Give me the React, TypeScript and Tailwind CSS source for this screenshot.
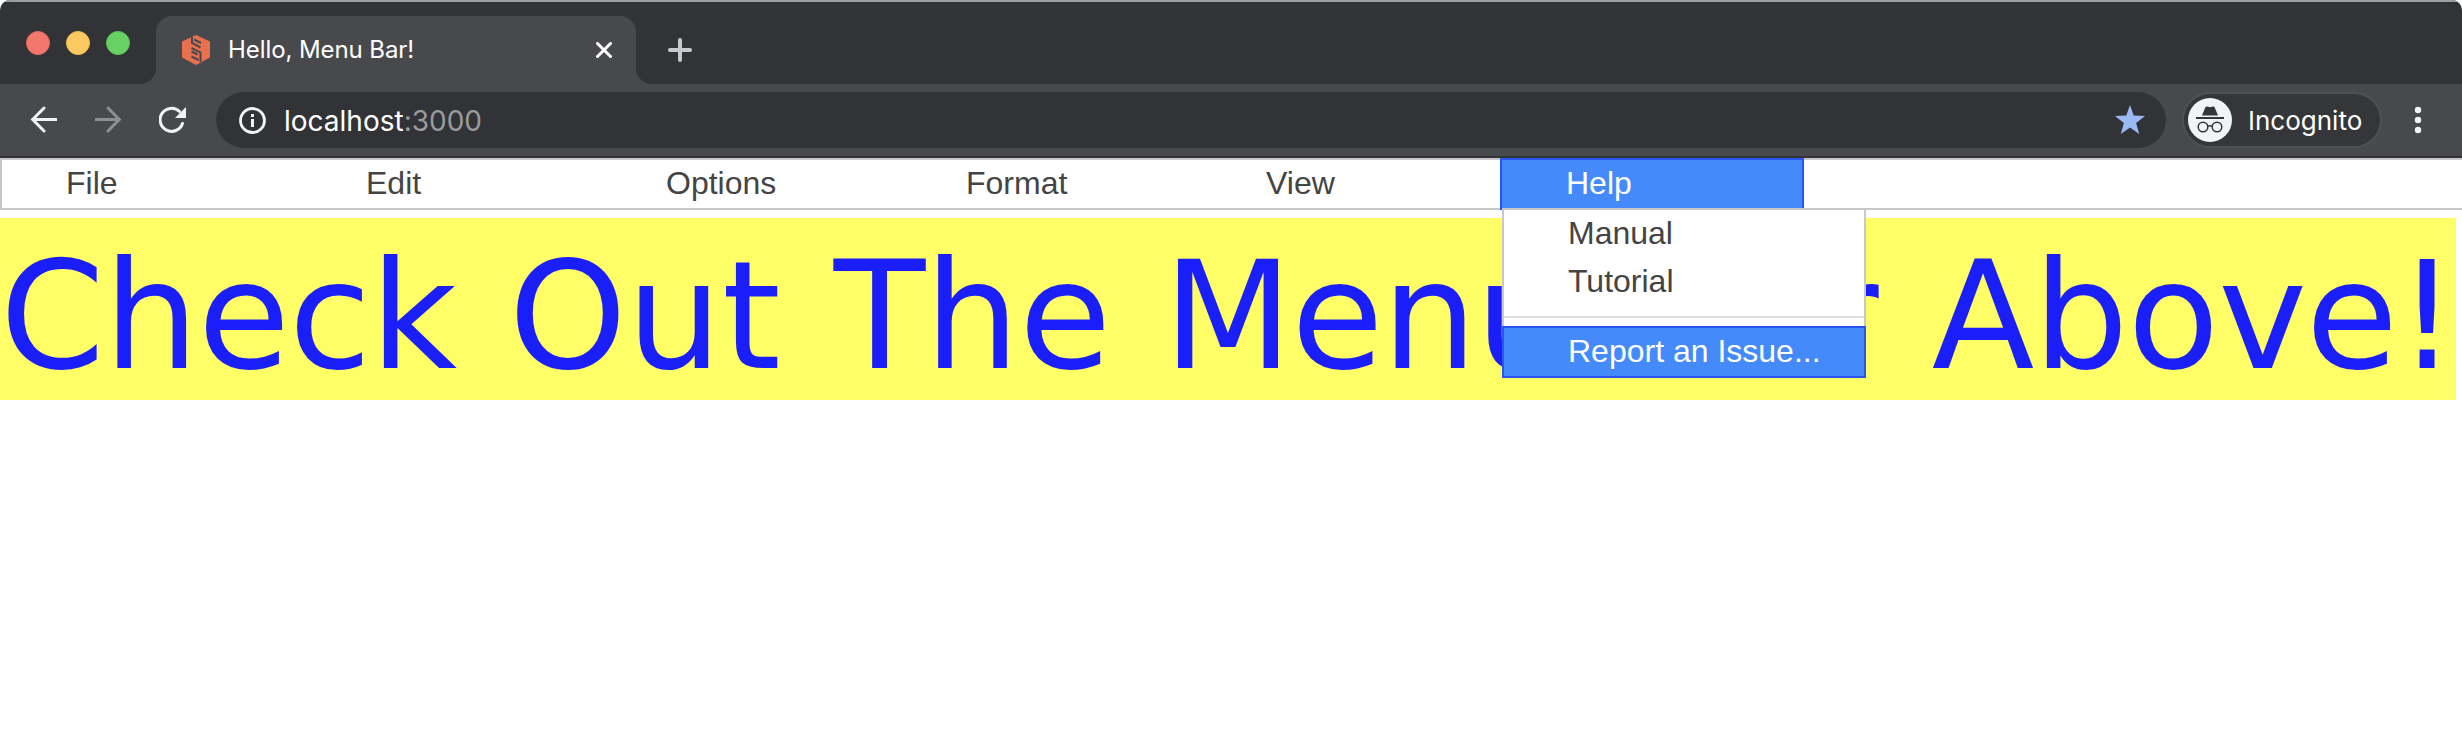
import React from 'react';

const MENUS = ['File', 'Edit', 'Options', 'Format', 'View'];

const WORDS = [
  { text: 'Check', cls: 'w-[456px] tracking-[-1.08px]' },
  { text: 'Out', cls: 'w-[272.1px]' },
  { text: 'The', cls: 'w-[276.8px] tracking-[-0.75px]' },
  { text: 'Menu', cls: 'w-[405.8px] tracking-[-1.5px]' },
  { text: 'Bar', cls: 'w-[257.1px] tracking-[0.2px]' },
  { text: 'Above!', cls: 'w-[524.4px] tracking-[-1.08px]' },
];

function TabStrip() {
  return (
    <div className="flex h-[84px] border-t-2 border-[#9b9fa0] bg-[#323337]">
      <div className="flex w-[140px] gap-4 pt-[29px] pl-[26px]">
        <span className="size-6 shrink-0 rounded-full border border-[#e9695f] bg-[#f4776d]" />
        <span className="size-6 shrink-0 rounded-full border border-[#f2bd50] bg-[#fbc95f]" />
        <span className="size-6 shrink-0 rounded-full border border-[#5bc455] bg-[#67d165]" />
      </div>
      <svg className="mt-[66px] size-4" viewBox="0 0 16 16">
        <path d="M16 0v16H0A16 16 0 0 0 16 0z" fill="#48494c" />
      </svg>
      <div className="mt-[14px] flex h-[68px] w-[480px] items-center rounded-t-2xl bg-[#48494c] pr-6 pl-[26px]">
        <svg className="size-[30px] shrink-0" viewBox="0 0 30 30">
          <path d="M14 0L28 6.500v16L14 30 0 22.500v-16z" fill="#e8704f" />
          <path
            d="M10 2v6l8.500 4.500M12 4.500l7 3.500M9.500 13l9 4.500v9.500M9.500 16.500l6 3M9.500 21.500l7 3.500"
            stroke="#48494c"
            strokeWidth="2"
            fill="none"
          />
        </svg>
        <span className="ml-4 flex-1 text-[24px] leading-[30px] tracking-[-0.08px] whitespace-nowrap text-white">
          Hello, Menu Bar!
        </span>
        <svg className="size-4" viewBox="0 0 16 16" stroke="#fff" strokeWidth="3" strokeLinecap="round">
          <path d="M1.500 1.500l13 13M14.500 1.500l-13 13" />
        </svg>
      </div>
      <svg className="mt-[66px] size-4" viewBox="0 0 16 16">
        <path d="M0 0v16h16A16 16 0 0 1 0 0z" fill="#48494c" />
      </svg>
      <svg className="mt-9 ml-4 size-6" viewBox="0 0 24 24" stroke="#c6c9ce" strokeWidth="4" strokeLinecap="round">
        <path d="M12 2v20M2 12h20" />
      </svg>
    </div>
  );
}

function Toolbar() {
  return (
    <div className="flex h-[74px] items-start border-b-2 border-[#323337] bg-[#48494c] pt-2">
      <div className="flex h-14 w-[216px] shrink-0 items-center pl-[30px]">
        <svg className="size-7" viewBox="0 0 28 28" fill="none" stroke="#f1f3f4" strokeWidth="3">
          <path d="M27 13.500H3" />
          <path d="M14 2L2.700 13.500 14 25" strokeLinecap="round" />
        </svg>
        <svg className="ml-9 size-7" viewBox="0 0 28 28" fill="none" stroke="#8e8f92" strokeWidth="3">
          <path d="M1 13.500h24" />
          <path d="M14 2L25.300 13.500 14 25" strokeLinecap="round" />
        </svg>
        <svg className="ml-[37px] size-7" viewBox="0 0 28 28" fill="none">
          <path d="M23.500 17.500A11.500 11.500 0 1 1 20.500 5.500" stroke="#f1f3f4" strokeWidth="3" strokeLinecap="round" />
          <path d="M27 1v11H16z" fill="#f1f3f4" />
        </svg>
      </div>
      <div className="flex h-14 w-[1950px] shrink-0 items-center rounded-full bg-[#323337] pr-[21px] pl-[22px]">
        <svg className="size-7 shrink-0" viewBox="0 0 28 28" fill="none">
          <circle cx="14.500" cy="14.500" r="12" stroke="#f1f3f4" strokeWidth="2.800" />
          <path d="M13 13h3v8h-3zM13 8h3v3h-3z" fill="#f1f3f4" />
        </svg>
        <span className="ml-[18px] flex-1 pt-0.5 text-[28px] leading-8 text-white">
          localhost<span className="text-[#9a9b9d]">:3000</span>
        </span>
        <svg className="size-[30px]" viewBox="0 0 30 30">
          <path d="M15 0l3.700 10.500L30 10.900l-8.900 7 3.100 11L15 22.600l-9.200 6.300 3.100-11L0 10.900l11.300-.4z" fill="#9bbaf5" />
        </svg>
      </div>
      <div className="ml-4 flex h-14 w-[200px] shrink-0 items-center rounded-full border-2 border-[#505155] bg-[#35363a] pl-1">
        <svg className="size-11 shrink-0" viewBox="0 0 44 44">
          <circle cx="22" cy="22" r="22" fill="#f1f3f4" />
          <path d="M14 17.500l3.300-8c.4-.9 1.200-1.200 2-.9l2.700.7 2.700-.7c.8-.3 1.600 0 2 .9l3.300 8z" fill="#35363a" />
          <path d="M8 19h28v2H8z" fill="#35363a" />
          <g fill="none" stroke="#35363a" strokeWidth="1.500">
            <circle cx="15" cy="29" r="4.800" />
            <circle cx="29" cy="29" r="4.800" />
            <path d="M19.800 28.500q2.200-1.600 4.400 0" />
          </g>
        </svg>
        <span className="ml-4 pt-0.5 text-[26px] leading-8 whitespace-nowrap text-white">Incognito</span>
      </div>
      <svg className="ml-8 h-14 w-2" viewBox="0 0 8 56" fill="#f1f3f4">
        <circle cx="4" cy="18" r="3.200" />
        <circle cx="4" cy="28" r="3.200" />
        <circle cx="4" cy="38" r="3.200" />
      </svg>
    </div>
  );
}

function HelpMenu() {
  return (
    <div className="absolute top-[50px] left-0 h-[170px] w-[364px] border-2 border-[#c8c8c8] bg-white text-[#444]">
      <div className="h-12 pl-16 leading-[46px]">Manual</div>
      <div className="h-12 pl-16 leading-[46px]">Tutorial</div>
      <div className="mt-2.5 h-0.5 bg-[#ddd]" />
      <div className="-mx-0.5 mt-2 h-[52px] border-2 border-[#2b55f3] bg-[#448afa] pl-16 leading-[46px] text-white">
        Report an Issue...
      </div>
    </div>
  );
}

export default function App() {
  return (
    <div className="h-[750px] w-[2462px] overflow-hidden bg-white">
      <header className="overflow-hidden rounded-t-[10px] font-['Inter',sans-serif]">
        <TabStrip />
        <Toolbar />
      </header>
      <nav className="flex h-[52px] border-2 border-r-0 border-[#c8c8c8] bg-white font-['Liberation_Sans',sans-serif] text-[32px] leading-[46px] text-[#444]">
        {MENUS.map((name) => (
          <div key={name} className="w-[300px] shrink-0 pl-16">
            {name}
          </div>
        ))}
        <div className="relative -mt-0.5 h-[52px] w-[300px]">
          <div className="-mx-0.5 h-[52px] w-[304px] border-2 border-[#2b55f3] bg-[#448afa] pl-16 text-white">Help</div>
          <HelpMenu />
        </div>
      </nav>
      <h1 className="mt-2 flex h-[182px] w-[2456px] gap-[52.8px] bg-[#fffe66] font-['DejaVu_Sans',sans-serif] text-[150px] leading-[196px] text-[#1a1ffa] [font-kerning:none]">
        {WORDS.map((word) => (
          <span key={word.text} className={`shrink-0 ${word.cls}`}>
            {word.text}
          </span>
        ))}
      </h1>
    </div>
  );
}
